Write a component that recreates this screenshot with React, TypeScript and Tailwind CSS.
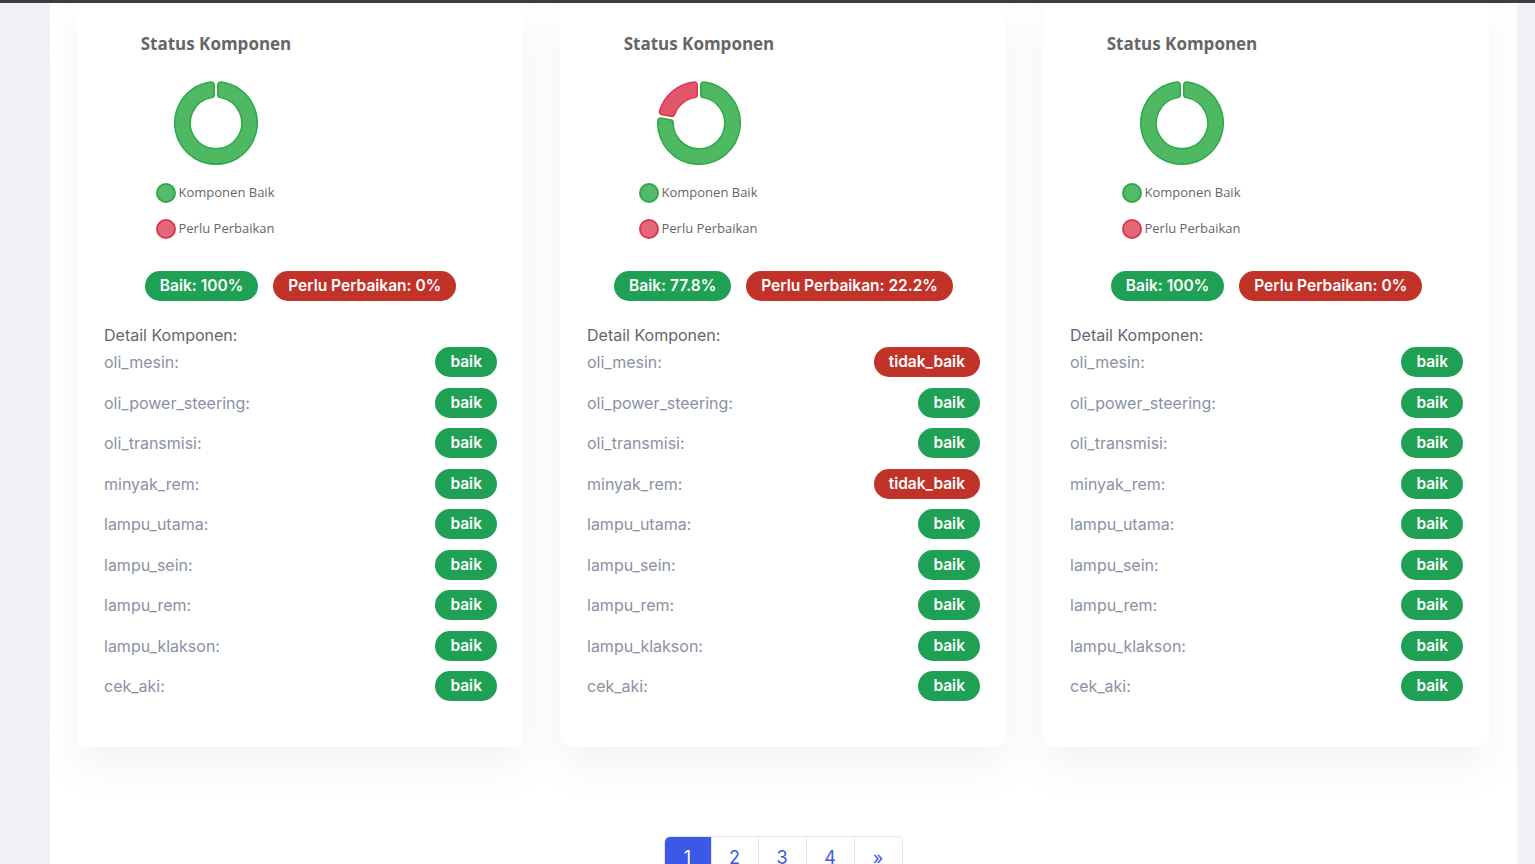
import React from 'react'

type Item = { name: string; ok: boolean }

const names = [
    'oli_mesin',
    'oli_power_steering',
    'oli_transmisi',
    'minyak_rem',
    'lampu_utama',
    'lampu_sein',
    'lampu_rem',
    'lampu_klakson',
    'cek_aki',
]

const cards: { good: string; bad: string; bad_frac: number; items: Item[] }[] = [
    { good: '100%', bad: '0%', bad_frac: 0, items: names.map((n) => ({ name: n, ok: true })) },
    {
        good: '77.8%',
        bad: '22.2%',
        bad_frac: 0.222,
        items: names.map((n) => ({ name: n, ok: n !== 'oli_mesin' && n !== 'minyak_rem' })),
    },
    { good: '100%', bad: '0%', bad_frac: 0, items: names.map((n) => ({ name: n, ok: true })) },
]

// annular sector, inset so a fat round-join stroke gives rounded corners
const sector = (a0: number, a1: number) => {
    const c = 42
    const ro = 38
    const ri = 29
    const pad = 5
    const s0o = a0 + pad / ro
    const s1o = a1 - pad / ro
    const s0i = a0 + pad / ri
    const s1i = a1 - pad / ri
    const pt = (r: number, a: number) => `${(c + r * Math.cos(a)).toFixed(2)} ${(c + r * Math.sin(a)).toFixed(2)}`
    const bigO = s1o - s0o > Math.PI ? 1 : 0
    const bigI = s1i - s0i > Math.PI ? 1 : 0
    return `M ${pt(ro, s0o)} A ${ro} ${ro} 0 ${bigO} 1 ${pt(ro, s1o)} L ${pt(ri, s1i)} A ${ri} ${ri} 0 ${bigI} 0 ${pt(ri, s0i)} Z`
}

const Segment = ({ d, fill, border }: { d: string; fill: string; border: string }) => (
    <>
        <path d={d} fill={border} stroke={border} strokeWidth={8} strokeLinejoin='round' />
        <path d={d} fill={fill} stroke={fill} strokeWidth={5} strokeLinejoin='round' />
    </>
)

const Donut = ({ badFrac }: { badFrac: number }) => {
    const start = -Math.PI / 2
    const full = Math.PI * 2
    const split = start + full * (1 - badFrac)
    return (
        <svg width='84' height='84' viewBox='0 0 84 84'>
            <Segment d={sector(start, split)} fill='#4fb862' border='#2ea84a' />
            {badFrac > 0 && <Segment d={sector(split, start + full)} fill='#e2566a' border='#d93a4e' />}
        </svg>
    )
}

const Card = ({ good, bad, badFrac, items }: { good: string; bad: string; badFrac: number; items: Item[] }) => {
    return (
        <div className='bg-white rounded-b-xl shadow-[0_18px_40px_rgba(110,120,160,0.09)] pt-[29px] pl-[27px] pr-[26px] pb-[46px]'>
            <div className='w-[224px] flex flex-col items-center font-["Open_Sans",sans-serif] text-[#666]'>
                <h3 className='font-bold text-[17px] leading-[24px]'>Status Komponen</h3>
                <div className='mt-[25px]'>
                    <Donut badFrac={badFrac} />
                </div>
                <div className='mt-[18px] flex items-center gap-[3px] h-[20px] -ml-[2px]'>
                    <span className='w-[20px] h-[20px] rounded-full bg-[#55bb6a] border-2 border-[#2ea84a]'></span>
                    <span className='text-[13px]'>Komponen Baik</span>
                </div>
                <div className='mt-[16px] flex items-center gap-[3px] h-[20px] -ml-[2px]'>
                    <span className='w-[20px] h-[20px] rounded-full bg-[#e4687a] border-2 border-[#d93a4e]'></span>
                    <span className='text-[13px]'>Perlu Perbaikan</span>
                </div>
            </div>

            <div className='mt-[32px] flex justify-center gap-[15px] font-["Inter",sans-serif]'>
                <span className='h-[30px] px-[15px] rounded-full bg-[#1ea154] text-white text-[15.5px] font-semibold flex items-center'>Baik: {good}</span>
                <span className='h-[30px] px-[15px] rounded-full bg-[#c13228] text-white text-[15.5px] font-semibold flex items-center'>Perlu Perbaikan: {bad}</span>
            </div>

            <div className='mt-[22px] font-["Inter",sans-serif]'>
                <p className='text-[16px] leading-[24px] text-[#616772]'>Detail Komponen:</p>
                <div className='flex flex-col gap-[10.5px]'>
                    {items.map((it) => (
                        <div key={it.name} className='flex items-center justify-between h-[30px]'>
                            <span className='text-[16px] text-[#8a91a3]'>{it.name}:</span>
                            <span className={`h-[30px] px-[15px] rounded-full text-white text-[15.5px] font-semibold flex items-center ${it.ok ? 'bg-[#1ea154]' : 'bg-[#c13228]'}`}>
                                {it.ok ? 'baik' : 'tidak_baik'}
                            </span>
                        </div>
                    ))}
                </div>
            </div>
        </div>
    )
}

const App = () => {
    return (
        <div className='min-h-screen bg-[#f1f2f7] flex flex-col overflow-hidden'>
            <div className='h-[3px] bg-[#3d3d3d]'></div>
            <div className='flex flex-1'>
                <div className='w-[50px] shrink-0'></div>
                <div className='w-[1467px] shrink-0 bg-white px-[27px] pr-[28px] min-h-[861px]'>
                    <div className='grid grid-cols-3 gap-[37px]'>
                        {cards.map((c, i) => (
                            <Card key={i} good={c.good} bad={c.bad} badFrac={c.bad_frac} items={c.items} />
                        ))}
                    </div>

                    <div className='mt-[89px] flex justify-center font-["Inter",sans-serif]'>
                        <div className='flex border border-[#e3e5ea] rounded-t-md overflow-hidden text-[18px]'>
                            <span className='w-[46px] h-[40px] flex items-center justify-center bg-[#3c58e6] text-white'>1</span>
                            <span className='w-[47px] h-[40px] flex items-center justify-center border-l border-[#e3e5ea] text-[#3c58e6]'>2</span>
                            <span className='w-[48px] h-[40px] flex items-center justify-center border-l border-[#e3e5ea] text-[#3c58e6]'>3</span>
                            <span className='w-[48px] h-[40px] flex items-center justify-center border-l border-[#e3e5ea] text-[#3c58e6]'>4</span>
                            <span className='w-[48px] h-[40px] flex items-center justify-center border-l border-[#e3e5ea] text-[#3c58e6]'>»</span>
                        </div>
                    </div>
                </div>
                <div className='flex-1'></div>
            </div>
        </div>
    )
}

export default App
